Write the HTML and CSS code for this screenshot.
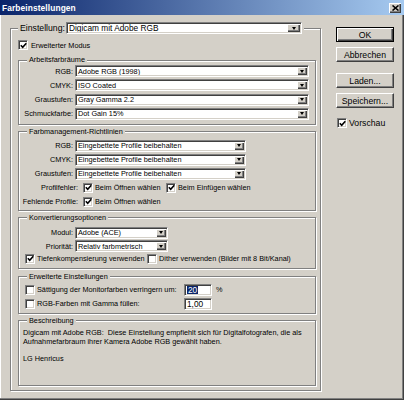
FILE: index.html
```html
<!DOCTYPE html>
<html lang="de">
<head>
<meta charset="utf-8">
<title>Farbeinstellungen</title>
<link rel="stylesheet" href="styles.css">
</head>
<body>
<div class="window">
  <div class="titlebar">
    <span class="title">Farbeinstellungen</span>
    <span class="close"><svg width="7" height="6" viewBox="0 0 7 6"><path d="M0.5 0.5 L6.5 5.5 M6.5 0.5 L0.5 5.5" stroke="#000" stroke-width="1.6" fill="none"/></svg></span>
  </div>
  <div class="content">
    <fieldset class="main">
      <legend class="main-legend">
        <span class="main-label">Einstellung:</span>
        <span class="combo combo-main"><span class="val">Digicam mit Adobe RGB</span><span class="arrow arrow-main"><i></i></span></span>
      </legend>

      <div class="check-row top-check">
        <span class="cb"><svg width="7" height="7" viewBox="0 0 7 7"><path d="M0.8 3.2 L2.7 5.2 L6.3 1.2" stroke="#000" stroke-width="1.6" fill="none"/></svg></span>
        <span>Erweiterter Modus</span>
      </div>

      <fieldset class="grp g1">
        <legend>Arbeitsfarbräume</legend>
        <div class="rows">
          <div class="row"><span class="lbl">RGB:</span><span class="combo w1"><span class="val">Adobe RGB (1998)</span><span class="arrow"><i></i></span></span></div>
          <div class="row"><span class="lbl">CMYK:</span><span class="combo w1"><span class="val">ISO Coated</span><span class="arrow"><i></i></span></span></div>
          <div class="row"><span class="lbl">Graustufen:</span><span class="combo w1"><span class="val">Gray Gamma 2.2</span><span class="arrow"><i></i></span></span></div>
          <div class="row"><span class="lbl">Schmuckfarbe:</span><span class="combo w1"><span class="val">Dot Gain 15%</span><span class="arrow"><i></i></span></span></div>
        </div>
      </fieldset>

      <fieldset class="grp g2">
        <legend>Farbmanagement-Richtlinien</legend>
        <div class="rows">
          <div class="row"><span class="lbl">RGB:</span><span class="combo w2"><span class="val">Eingebettete Profile beibehalten</span><span class="arrow"><i></i></span></span></div>
          <div class="row"><span class="lbl">CMYK:</span><span class="combo w2"><span class="val">Eingebettete Profile beibehalten</span><span class="arrow"><i></i></span></span></div>
          <div class="row"><span class="lbl">Graustufen:</span><span class="combo w2"><span class="val">Eingebettete Profile beibehalten</span><span class="arrow"><i></i></span></span></div>
          <div class="row">
            <span class="lbl lbl-wide">Profilfehler:</span>
            <span class="cb cb-first"><svg width="7" height="7" viewBox="0 0 7 7"><path d="M0.8 3.2 L2.7 5.2 L6.3 1.2" stroke="#000" stroke-width="1.6" fill="none"/></svg></span>
            <span class="opt-text opt-open">Beim Öffnen wählen</span>
            <span class="cb"><svg width="7" height="7" viewBox="0 0 7 7"><path d="M0.8 3.2 L2.7 5.2 L6.3 1.2" stroke="#000" stroke-width="1.6" fill="none"/></svg></span>
            <span class="opt-text">Beim Einfügen wählen</span>
          </div>
          <div class="row">
            <span class="lbl lbl-wide">Fehlende Profile:</span>
            <span class="cb cb-first"><svg width="7" height="7" viewBox="0 0 7 7"><path d="M0.8 3.2 L2.7 5.2 L6.3 1.2" stroke="#000" stroke-width="1.6" fill="none"/></svg></span>
            <span class="opt-text">Beim Öffnen wählen</span>
          </div>
        </div>
      </fieldset>

      <fieldset class="grp g3">
        <legend>Konvertierungsoptionen</legend>
        <div class="rows">
          <div class="row"><span class="lbl">Modul:</span><span class="combo w3"><span class="val">Adobe (ACE)</span><span class="arrow"><i></i></span></span></div>
          <div class="row"><span class="lbl">Priorität:</span><span class="combo w3"><span class="val">Relativ farbmetrisch</span><span class="arrow"><i></i></span></span></div>
          <div class="row check-line">
            <span class="cb"><svg width="7" height="7" viewBox="0 0 7 7"><path d="M0.8 3.2 L2.7 5.2 L6.3 1.2" stroke="#000" stroke-width="1.6" fill="none"/></svg></span>
            <span class="opt-text opt-tiefen">Tiefenkompensierung verwenden</span>
            <span class="cb"></span>
            <span class="opt-text">Dither verwenden (Bilder mit 8 Bit/Kanal)</span>
          </div>
        </div>
      </fieldset>

      <fieldset class="grp g4">
        <legend>Erweiterte Einstellungen</legend>
        <div class="rows">
          <div class="row check-line">
            <span class="cb"></span>
            <span class="opt-text opt-long">Sättigung der Monitorfarben verringern um:</span>
            <span class="input"><span class="sel">20</span></span>
            <span class="unit">%</span>
          </div>
          <div class="row check-line">
            <span class="cb"></span>
            <span class="opt-text opt-long">RGB-Farben mit Gamma füllen:</span>
            <span class="input"><span class="plain">1,00</span></span>
          </div>
        </div>
      </fieldset>

      <fieldset class="grp g5">
        <legend>Beschreibung</legend>
        <div class="desc">
          <p>Digicam mit Adobe RGB:&nbsp; Diese Einstellung empfiehlt sich für Digitalfotografen, die als</p>
          <p>Aufnahmefarbraum ihrer Kamera Adobe RGB gewählt haben.</p>
          <p>&nbsp;</p>
          <p>LG Henricus</p>
        </div>
      </fieldset>
    </fieldset>

    <div class="side">
      <div class="btn default">OK</div>
      <div class="btn b-cancel">Abbrechen</div>
      <div class="btn b-load">Laden...</div>
      <div class="btn b-save">Speichern...</div>
      <div class="check-row preview">
        <span class="cb"><svg width="7" height="7" viewBox="0 0 7 7"><path d="M0.8 3.2 L2.7 5.2 L6.3 1.2" stroke="#000" stroke-width="1.6" fill="none"/></svg></span>
        <span class="big-text">Vorschau</span>
      </div>
    </div>
  </div>
</div>
</body>
</html>
```
FILE: styles.css
```css
* { box-sizing: border-box; }

html, body {
  margin: 0;
  padding: 0;
}

body {
  width: 404px;
  height: 400px;
  overflow: hidden;
  background: #d4d0c8;
  font-family: "Liberation Sans", Arial, sans-serif;
  font-size: 7.3px;
  color: #000;
}

.window {
  width: 404px;
  height: 400px;
  background: #d4d0c8;
  display: flex;
  flex-direction: column;
  box-shadow: inset -1px -1px 0 #404040, inset -2px -2px 0 #808080, inset 1px 0 0 #ffffff;
}

.titlebar {
  flex: none;
  height: 15px;
  display: flex;
  align-items: center;
  justify-content: space-between;
  padding: 0 3px 0 2px;
  background: linear-gradient(90deg, #0a246a 0%, #a6caf0 100%);
}

.title {
  color: #fff;
  font-weight: bold;
  font-size: 8.4px;
  letter-spacing: 0.1px;
}

.close {
  width: 12px;
  height: 10px;
  display: flex;
  align-items: center;
  justify-content: center;
  background: #d4d0c8;
  box-shadow: inset 1px 1px 0 #fff, inset -1px -1px 0 #404040, inset -2px -2px 0 #808080;
}

.content {
  flex: 1;
  display: flex;
  align-items: flex-start;
  padding: 5px 0 0 10px;
}

fieldset {
  margin: 0;
  min-width: 0;
  border: 1px solid #808080;
  box-shadow: inset 1px 1px 0 #fff, 1px 1px 0 #fff;
}

legend {
  padding: 0 2px;
  line-height: 10px;
  background: #d4d0c8;
}

/* main frame */
.main {
  width: 311px;
  padding: 4px 4px 4px 7px;
}

.main-legend {
  display: flex;
  align-items: center;
  height: 16px;
  padding: 0 2px;
}

.main-label {
  width: 44px;
  font-size: 8.7px;
  white-space: nowrap;
}

.combo-main {
  width: 236px;
  height: 16px;
  margin-left: 2px;
}

.combo-main .val {
  font-size: 8.3px;
  padding-left: 3px;
}

.check-row {
  display: flex;
  align-items: center;
  height: 10px;
}

.check-row .cb {
  margin-right: 3px;
}

/* groups */
.grp {
  padding: 0;
}

.grp legend {
  margin-left: 8px;
}

.g1 { margin-top: 5px; }
.g2 { margin-top: 2px; }
.g3 { margin-top: 2px; }
.g4 { margin-top: 3px; }
.g5 { margin-top: 2px; }

.rows {
  display: flex;
  flex-direction: column;
}

.g1 .rows { gap: 2.3px; padding: 0 0 4px; }
.g2 .rows { gap: 2px; padding: 3px 0 2px; }
.g3 .rows { gap: 1.5px; padding: 4px 0 4px; }
.g4 .rows { gap: 2px; padding: 2px 0 3px; }

.row {
  display: flex;
  align-items: center;
  height: 12px;
  white-space: nowrap;
}

.lbl {
  width: 54px;
  margin-right: 2px;
  text-align: right;
}

.lbl-wide {
  width: 59px;
  margin-right: 5px;
}

.check-line {
  padding-left: 6px;
}

.g3 .check-line { height: 10px; }

.opt-text {
  margin-left: 2px;
}

.opt-open { width: 71px; }
.opt-tiefen { width: 110px; }
.opt-long { width: 147px; }

/* combo box */
.combo {
  display: flex;
  align-items: stretch;
  height: 12px;
  padding: 1px;
  background: #fff;
  border: 1px solid;
  border-color: #808080 #fff #fff #808080;
  box-shadow: inset 1px 1px 0 #404040, inset -1px -1px 0 #d4d0c8;
}

.combo .val {
  flex: 1;
  display: flex;
  align-items: center;
  padding-left: 1px;
  overflow: hidden;
  white-space: nowrap;
}

.w1 { width: 234px; }
.w2 { width: 171px; }
.w3 { width: 93px; }

.arrow {
  flex: none;
  width: 10px;
  display: flex;
  align-items: center;
  justify-content: center;
  background: #d4d0c8;
  box-shadow: inset 1px 1px 0 #fff, inset -1px -1px 0 #404040, inset -2px -2px 0 #808080;
}

.arrow-main {
  width: 13px;
}

.arrow i {
  display: block;
  width: 0;
  height: 0;
  border-left: 2.5px solid transparent;
  border-right: 2.5px solid transparent;
  border-top: 3px solid #000;
}

/* checkbox */
.cb {
  flex: none;
  width: 10px;
  height: 10px;
  display: flex;
  align-items: center;
  justify-content: center;
  background: #fff;
  border: 1px solid;
  border-color: #808080 #fff #fff #808080;
  box-shadow: inset 1px 1px 0 #404040, inset -1px -1px 0 #d4d0c8;
}

.cb-first {
  margin-right: 0;
}

/* text input */
.input {
  width: 28px;
  height: 12px;
  display: flex;
  align-items: center;
  padding: 0 2px;
  background: #fff;
  border: 1px solid;
  border-color: #808080 #fff #fff #808080;
  box-shadow: inset 1px 1px 0 #404040, inset -1px -1px 0 #d4d0c8;
}

.input .sel {
  background: #0a246a;
  color: #fff;
  font-size: 8.3px;
  line-height: 8px;
  padding: 0 1px;
}

.input .plain {
  font-size: 8.3px;
}

.unit {
  margin-left: 4px;
}

/* description */
.desc {
  padding: 3.5px 0 21.9px 4px;
  line-height: 8.4px;
}

.desc p {
  margin: 0;
  white-space: nowrap;
}

/* right column */
.side {
  width: 58px;
  margin-left: 15px;
  margin-top: 7px;
  display: flex;
  flex-direction: column;
}

.btn {
  height: 15px;
  display: flex;
  align-items: center;
  justify-content: center;
  font-size: 8.7px;
  background: #d4d0c8;
  border: 1px solid;
  border-color: #fff #404040 #404040 #fff;
  box-shadow: inset -1px -1px 0 #808080;
}

.btn.default {
  border-color: #000;
  box-shadow: inset 1px 1px 0 #fff, inset -1px -1px 0 #404040, inset -2px -2px 0 #808080;
}

.b-cancel { margin-top: 5px; }
.b-load { margin-top: 11px; }
.b-save { margin-top: 5px; }

.preview {
  margin-top: 10px;
  padding-left: 1px;
}

.preview .cb { margin-right: 2px; }

.big-text {
  font-size: 8.7px;
}
```
